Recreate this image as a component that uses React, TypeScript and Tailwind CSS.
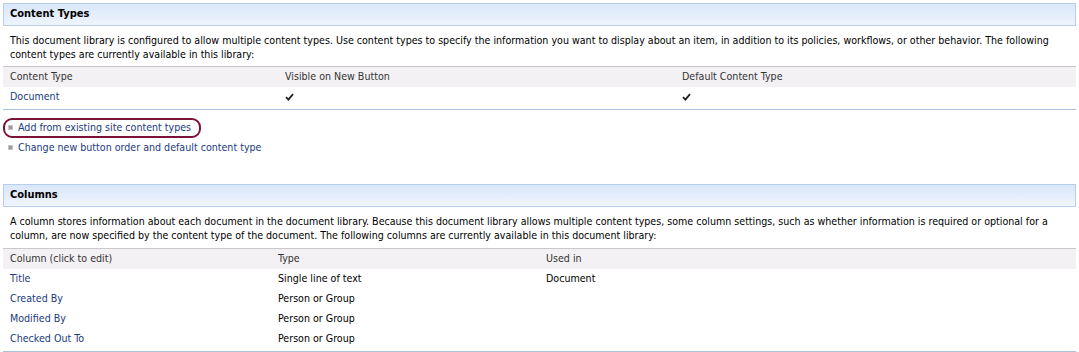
import React from "react";

const font = { fontFamily: '"DejaVu Sans Condensed", Tahoma, "Liberation Sans", sans-serif' };

function SectionHeader({ title }: { title: string }) {
  return (
    <div className="mx-[3px] h-[23px] border border-[#b6cfec] bg-gradient-to-b from-[#d9e7f9] to-[#eef5fe] pl-[6px] flex items-center">
      <span className="text-[11px] font-bold text-black">{title}</span>
    </div>
  );
}

function Check() {
  return (
    <svg width="9" height="8" viewBox="0 0 9 8" className="block">
      <path d="M1 4.2 L3.4 6.6 L8 1.2" fill="none" stroke="#222" strokeWidth="1.8" />
    </svg>
  );
}

function Bullet() {
  return <span className="inline-block w-[5px] h-[5px] bg-[#9a9a9a] border border-[#c4c4c4] mr-[5px] translate-y-[-1px]" />;
}

const columns = [
  { name: "Title", type: "Single line of text", used: "Document" },
  { name: "Created By", type: "Person or Group", used: "" },
  { name: "Modified By", type: "Person or Group", used: "" },
  { name: "Checked Out To", type: "Person or Group", used: "" },
];

export default function App() {
  return (
    <div className="w-[1079px] h-[352px] bg-white overflow-hidden text-[10.6px] text-black pt-[3px]" style={font}>
      {/* Content Types */}
      <SectionHeader title="Content Types" />
      <p className="px-[10px] pt-[7px] leading-[14px] whitespace-nowrap">
        This document library is configured to allow multiple content types. Use content types to specify the information you want to display about an item, in addition to its policies, workflows, or other behavior. The following
        <br />
        content types are currently available in this library:
      </p>
      <div className="mx-[3px] mt-[5px] border-t border-[#c8c8c8] border-b border-b-[#a8c2dc] pb-[2px]">
        <div className="grid grid-cols-[275px_397px_1fr] h-[20px] items-center bg-[#f4f1f4] px-[7px] text-[#333]">
          <span>Content Type</span>
          <span>Visible on New Button</span>
          <span>Default Content Type</span>
        </div>
        <div className="grid grid-cols-[275px_397px_1fr] h-[20px] items-center px-[7px]">
          <a className="text-[#1a3a7c]">Document</a>
          <Check />
          <Check />
        </div>
      </div>

      <div className="relative px-[8px] pt-[8px]">
        <div className="h-[20px] flex items-center text-[#1a3a7c]">
          <Bullet />
          Add from existing site content types
        </div>
        <div className="h-[20px] flex items-center text-[#1a3a7c]">
          <Bullet />
          Change new button order and default content type
        </div>
        <div className="absolute left-[3px] top-[8px] w-[198px] h-[20px] rounded-[9px] border-[2.5px] border-[#7c1238]" />
      </div>

      {/* Columns */}
      <div className="h-[26px]" />
      <SectionHeader title="Columns" />
      <p className="px-[10px] pt-[7px] leading-[14px] whitespace-nowrap">
        A column stores information about each document in the document library. Because this document library allows multiple content types, some column settings, such as whether information is required or optional for a
        <br />
        column, are now specified by the content type of the document. The following columns are currently available in this document library:
      </p>
      <div className="mx-[3px] mt-[6px] border-t border-[#c8c8c8] border-b border-b-[#a8c2dc] pb-[2px]">
        <div className="grid grid-cols-[268px_268px_1fr] h-[20px] items-center bg-[#f4f1f4] px-[7px] text-[#333]">
          <span>Column (click to edit)</span>
          <span>Type</span>
          <span>Used in</span>
        </div>
        {columns.map((c) => (
          <div key={c.name} className="grid grid-cols-[268px_268px_1fr] h-[20px] items-center px-[7px]">
            <a className="text-[#1a3a7c]">{c.name}</a>
            <span>{c.type}</span>
            <span>{c.used}</span>
          </div>
        ))}
      </div>
    </div>
  );
}
